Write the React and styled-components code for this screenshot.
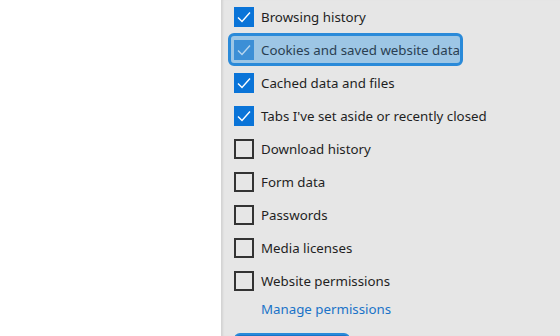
import React from "react";
import styled, { createGlobalStyle } from "styled-components";

const Global = createGlobalStyle`
  html, body { margin: 0; padding: 0; }
  body { width: 560px; height: 336px; overflow: hidden; background: #ffffff; font-family: "Noto Sans", "Open Sans", sans-serif; }
`;

const Page = styled.div`
  display: flex;
  width: 560px;
  height: 336px;
`;

const Blank = styled.div`
  width: 221px;
  flex: none;
  background: #ffffff;
`;

const Panel = styled.div`
  flex: 1;
  background: #e6e6e6;
  border-left: 1px solid #d4d4d4;
  box-shadow: inset 2px 0 2px -1px rgba(0,0,0,0.08);
  padding: 0 0 0 6px;
  display: flex;
  flex-direction: column;
  overflow: hidden;
`;

const Row = styled.label`
  flex: none;
  display: flex;
  align-items: center;
  gap: 7px;
  height: 33px;
  box-sizing: border-box;
  width: ${(p) => (p.$focus ? "235px" : "auto")};
  padding-left: 3px;
  border: 3px solid ${(p) => (p.$focus ? "#2a8ad9" : "transparent")};
  border-radius: 6px;
  background: ${(p) => (p.$focus ? "#9dc6e5" : "transparent")};
`;

const Box = styled.span`
  width: 20px;
  height: 20px;
  box-sizing: border-box;
  flex: none;
  display: flex;
  align-items: center;
  justify-content: center;
  background: ${(p) => (p.$checked ? (p.$focus ? "#3c8fd6" : "#0a74d8") : "transparent")};
  border: 2px solid ${(p) => (p.$checked ? (p.$focus ? "#3c8fd6" : "#0a74d8") : "#333333")};
`;

const Label = styled.span`
  font-size: 13.3px;
  color: ${(p) => (p.$focus ? "#2a3f52" : "#1f1f1f")};
  white-space: nowrap;
`;

const Link = styled.a`
  flex: none;
  display: block;
  margin: 3px 0 0 33px;
  line-height: 19px;
  font-size: 13.3px;
  color: #1a73c8;
  text-decoration: none;
`;

const Button = styled.div`
  flex: none;
  margin: 14px 0 0 6px;
  width: 112px;
  height: 30px;
  border: 2px solid #2a8ad9;
  border-radius: 6px;
  background: #1a73c8;
`;

const Check = ({ focus }) => (
  <svg width="14" height="12" viewBox="0 0 14 12">
    <path d="M1 6.5 L5 10.5 L13 1.5" fill="none" stroke={focus ? "#b7d6ef" : "#ffffff"} strokeWidth="1.4" />
  </svg>
);

const items = [
  { t: "Browsing history", c: true },
  { t: "Cookies and saved website data", c: true, f: true },
  { t: "Cached data and files", c: true },
  { t: "Tabs I've set aside or recently closed", c: true },
  { t: "Download history" },
  { t: "Form data" },
  { t: "Passwords" },
  { t: "Media licenses" },
  { t: "Website permissions" },
];

export default function App() {
  return (
    <>
      <Global />
      <Page>
        <Blank />
        <Panel>
          {items.map((it) => (
            <Row key={it.t} $focus={it.f}>
              <Box $checked={it.c} $focus={it.f}>{it.c && <Check focus={it.f} />}</Box>
              <Label $focus={it.f}>{it.t}</Label>
            </Row>
          ))}
          <Link href="#">Manage permissions</Link>
          <Button />
        </Panel>
      </Page>
    </>
  );
}
